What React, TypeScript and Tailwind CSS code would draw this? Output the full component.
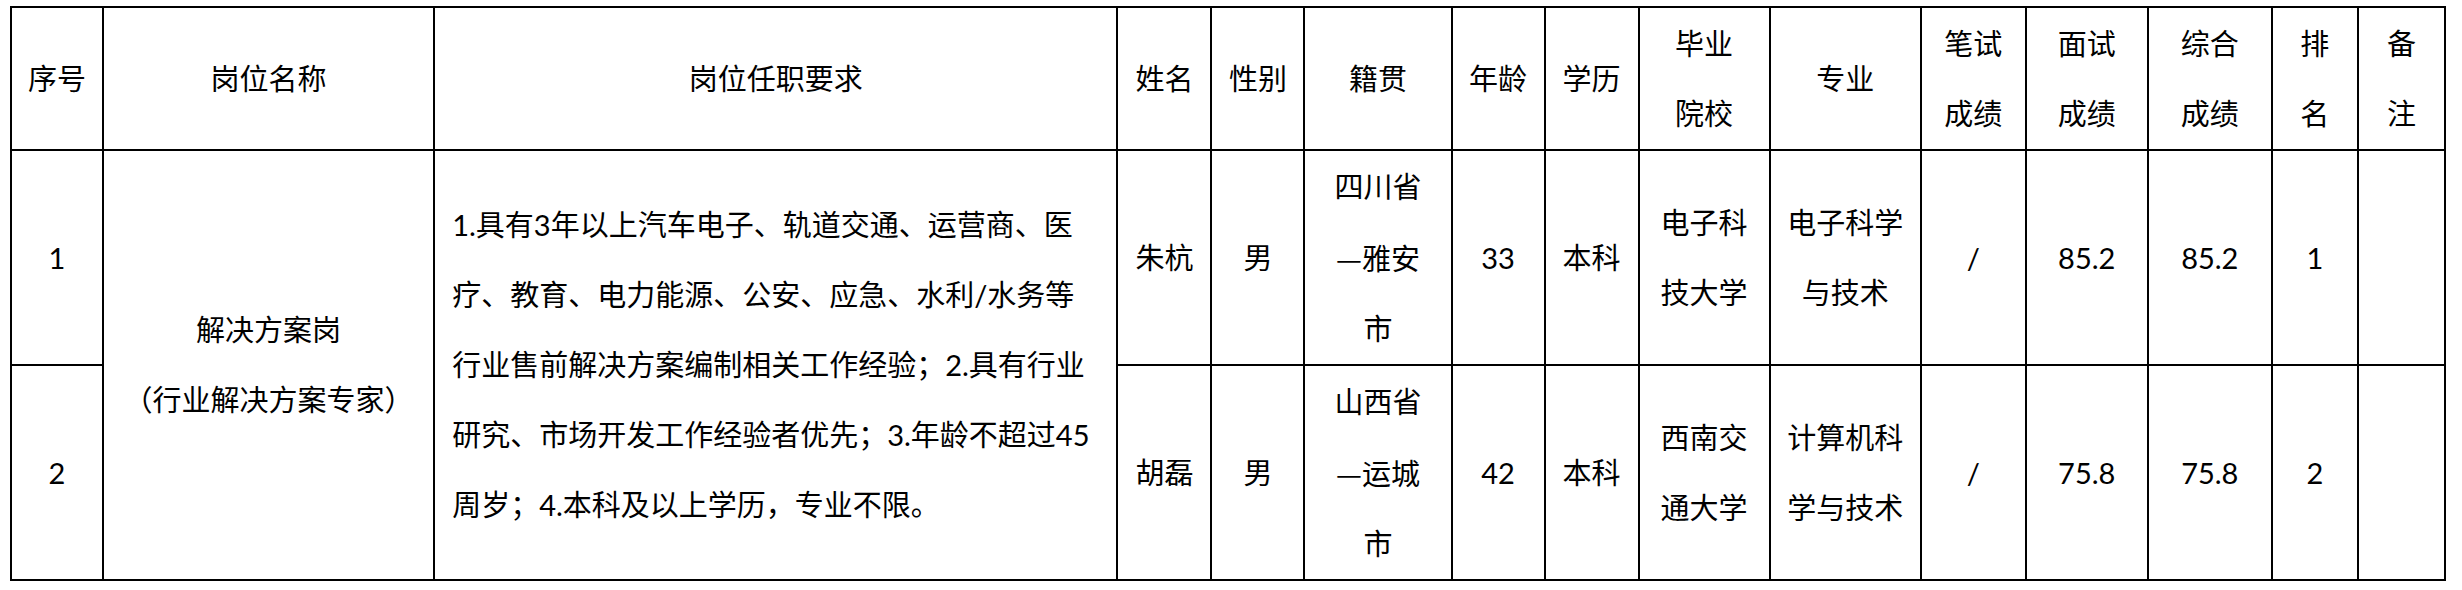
import React from 'react';

type Row = {
  no: string;
  name: string;
  sex: string;
  origin: [string, string, string];
  age: string;
  edu: string;
  school: string[];
  major: string[];
  written: string;
  interview: string;
  total: string;
  rank: string;
};

const rows: Row[] = [
  {
    no: '1',
    name: '朱杭',
    sex: '男',
    origin: ['四川省', '雅安', '市'],
    age: '33',
    edu: '本科',
    school: ['电子科', '技大学'],
    major: ['电子科学', '与技术'],
    written: '/',
    interview: '85.2',
    total: '85.2',
    rank: '1',
  },
  {
    no: '2',
    name: '胡磊',
    sex: '男',
    origin: ['山西省', '运城', '市'],
    age: '42',
    edu: '本科',
    school: ['西南交', '通大学'],
    major: ['计算机科', '学与技术'],
    written: '/',
    interview: '75.8',
    total: '75.8',
    rank: '2',
  },
];

const requirement = [
  '1.具有3年以上汽车电子、轨道交通、运营商、医',
  '疗、教育、电力能源、公安、应急、水利/水务等',
  '行业售前解决方案编制相关工作经验；2.具有行业',
  '研究、市场开发工作经验者优先；3.年龄不超过45',
  '周岁；4.本科及以上学历，专业不限。',
];

const cell = 'border-2 border-black text-center align-middle p-0';

const Lines: React.FC<{ lines: string[] }> = ({ lines }) => (
  <>
    {lines.map((l, i) => (
      <div key={i} className="whitespace-nowrap">
        {l}
      </div>
    ))}
  </>
);

// 籍贯: province, then "—city" on the next line, the dash set full width
const Origin: React.FC<{ parts: [string, string, string] }> = ({ parts }) => (
  <>
    <div className="whitespace-nowrap">{parts[0]}</div>
    <div className="whitespace-nowrap">
      <span className="font-['Noto_Sans_CJK_SC',sans-serif]">—</span>
      {parts[1]}
    </div>
    <div className="whitespace-nowrap">{parts[2]}</div>
  </>
);

export default function App() {
  return (
    <div className="w-[2462px] h-[590px] bg-white pt-[6px] pl-[10px] text-black font-['Lato','Noto_Sans_CJK_SC',sans-serif] text-[29px] leading-[70px]">
      <table className="table-fixed border-collapse w-[2436px]">
        <colgroup>
          <col className="w-[92px]" />
          <col className="w-[331px]" />
          <col className="w-[683px]" />
          <col className="w-[94px]" />
          <col className="w-[93px]" />
          <col className="w-[147px]" />
          <col className="w-[93px]" />
          <col className="w-[94px]" />
          <col className="w-[131px]" />
          <col className="w-[151px]" />
          <col className="w-[105px]" />
          <col className="w-[122px]" />
          <col className="w-[124px]" />
          <col className="w-[86px]" />
          <col className="w-[87px]" />
        </colgroup>
        <thead>
          <tr className="h-[143px]">
            <th className={`${cell} font-normal`}>序号</th>
            <th className={`${cell} font-normal`}>岗位名称</th>
            <th className={`${cell} font-normal`}>岗位任职要求</th>
            <th className={`${cell} font-normal`}>姓名</th>
            <th className={`${cell} font-normal`}>性别</th>
            <th className={`${cell} font-normal`}>籍贯</th>
            <th className={`${cell} font-normal`}>年龄</th>
            <th className={`${cell} font-normal`}>学历</th>
            <th className={`${cell} font-normal`}>
              <Lines lines={['毕业', '院校']} />
            </th>
            <th className={`${cell} font-normal`}>专业</th>
            <th className={`${cell} font-normal`}>
              <Lines lines={['笔试', '成绩']} />
            </th>
            <th className={`${cell} font-normal`}>
              <Lines lines={['面试', '成绩']} />
            </th>
            <th className={`${cell} font-normal`}>
              <Lines lines={['综合', '成绩']} />
            </th>
            <th className={`${cell} font-normal`}>
              <Lines lines={['排', '名']} />
            </th>
            <th className={`${cell} font-normal`}>
              <Lines lines={['备', '注']} />
            </th>
          </tr>
        </thead>
        <tbody>
          {rows.map((r, i) => (
            <tr key={r.no} className="h-[215px]">
              <td className={cell}>{r.no}</td>
              {i === 0 && (
                <>
                  <td rowSpan={2} className={cell}>
                    <Lines lines={['解决方案岗', '（行业解决方案专家）']} />
                  </td>
                  <td rowSpan={2} className={`${cell} text-left pl-[17px]`}>
                    <Lines lines={requirement} />
                  </td>
                </>
              )}
              <td className={cell}>{r.name}</td>
              <td className={cell}>{r.sex}</td>
              <td className={cell}>
                <Origin parts={r.origin} />
              </td>
              <td className={cell}>{r.age}</td>
              <td className={cell}>{r.edu}</td>
              <td className={cell}>
                <Lines lines={r.school} />
              </td>
              <td className={cell}>
                <Lines lines={r.major} />
              </td>
              <td className={cell}>{r.written}</td>
              <td className={cell}>{r.interview}</td>
              <td className={cell}>{r.total}</td>
              <td className={cell}>{r.rank}</td>
              <td className={cell}></td>
            </tr>
          ))}
        </tbody>
      </table>
    </div>
  );
}
